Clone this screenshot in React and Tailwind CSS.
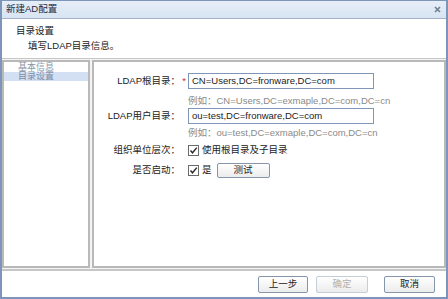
import React from "react";

const FONT = { fontFamily: '"Liberation Sans", "Noto Sans CJK SC", sans-serif' };

function CheckBox() {
  return (
    <svg width="11" height="11" viewBox="0 0 11 11" className="shrink-0">
      <rect x="0.5" y="0.5" width="10" height="10" fill="#fff" stroke="#6b6b6b" />
      <path d="M2.5 5.5 L4.5 7.8 L8.8 2.6" fill="none" stroke="#2b2b2b" strokeWidth="1.4" />
    </svg>
  );
}

function Btn({ children, disabled, className = "" }) {
  return (
    <div
      className={`flex items-center justify-center rounded-[2px] border bg-gradient-to-b from-white to-[#ececec] text-[9.5px] ${
        disabled ? "border-[#c4cdd8] text-[#b0b0b0]" : "border-[#8595aa] text-[#222]"
      } ${className}`}
    >
      {children}
    </div>
  );
}

export default function App() {
  return (
    <div
      style={FONT}
      className="w-[448px] h-[299px] flex flex-col bg-white border-x-2 border-b-2 border-t border-[#7d95b8] text-[9.5px] text-[#222] overflow-hidden"
    >
      {/* title bar */}
      <div className="h-[18px] shrink-0 flex items-center justify-between pl-[4px] pr-[5px] bg-gradient-to-b from-[#e6eef8] to-[#d8e4f3] border-b border-[#a3b3c8]">
        <span className="text-[#1e2b3c]">新建AD配置</span>
        <svg width="7" height="7" viewBox="0 0 7 7">
          <path d="M1 1 L6 6 M6 1 L1 6" stroke="#6f7d8f" strokeWidth="1.6" />
        </svg>
      </div>

      {/* header */}
      <div className="h-[40px] shrink-0 flex flex-col pt-[6px] pl-[14px] gap-[4px] border-b border-[#c6c6c6]">
        <span className="leading-[11px]">目录设置</span>
        <span className="leading-[11px] pl-[12px]">填写LDAP目录信息。</span>
      </div>

      {/* body */}
      <div className="flex-1 flex gap-[2px] pt-[1px] pb-[1px] bg-[#f4f4f4]">
        <div className="w-[88px] bg-white border-2 border-[#b9b9b9]">
          <div className="h-[10px] leading-[10px] pl-[14px] text-[9px] text-[#8b96a6]">基本信息</div>
          <div className="h-[9px] leading-[9px] pl-[14px] text-[9px] text-[#7c89a3] bg-[#d3dff2]">目录设置</div>
        </div>

        <div className="flex-1 bg-white border-2 border-[#b9b9b9] pt-[11px]">
          <div className="flex items-center h-[16px]">
            <span className="w-[86px] text-right">LDAP根目录：</span>
            <span className="w-[8px] text-center text-[#d03030]">*</span>
            <div className="w-[186px] h-[16px] flex items-center border border-[#7f96b8] pl-[3px]">
              CN=Users,DC=fronware,DC=com
            </div>
          </div>
          <div className="h-[19px] pt-[6px] leading-[12px] pl-[94px] text-[#8a8a8a]">
            例如：CN=Users,DC=exmaple,DC=com,DC=cn
          </div>
          <div className="flex items-center h-[16px]">
            <span className="w-[86px] text-right">LDAP用户目录：</span>
            <span className="w-[8px]" />
            <div className="w-[186px] h-[16px] flex items-center border border-[#7f96b8] pl-[3px]">
              ou=test,DC=fronware,DC=com
            </div>
          </div>
          <div className="h-[17px] pt-[3px] leading-[12px] pl-[94px] text-[#8a8a8a]">
            例如：ou=test,DC=exmaple,DC=com,DC=cn
          </div>
          <div className="flex items-center h-[18px]">
            <span className="w-[86px] text-right">组织单位层次：</span>
            <span className="w-[8px]" />
            <CheckBox />
            <span className="ml-[3px]">使用根目录及子目录</span>
          </div>
          <div className="flex items-center h-[22px]">
            <span className="w-[86px] text-right">是否启动：</span>
            <span className="w-[8px]" />
            <CheckBox />
            <span className="ml-[3px]">是</span>
            <Btn className="ml-[5px] w-[53px] h-[15px]">测试</Btn>
          </div>
        </div>
      </div>

      {/* footer */}
      <div className="h-[28px] shrink-0 flex items-center justify-end gap-[8px] pr-[11px] border-t-2 border-[#c6c6c6]">
        <Btn className="w-[50px] h-[17px]">上一步</Btn>
        <Btn disabled className="w-[52px] h-[17px]">确定</Btn>
        <Btn className="w-[51px] h-[17px] ml-[8px]">取消</Btn>
      </div>
    </div>
  );
}
